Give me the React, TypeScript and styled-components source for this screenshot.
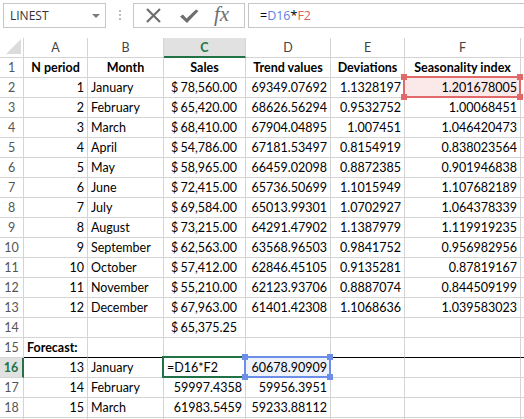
import styled, { createGlobalStyle } from "styled-components";

type Kind = "num" | "text" | "money" | "head" | "edit";
type Mark = "red" | "blue" | "active";
type Spec = { t?: string; k?: Kind; bold?: boolean; mark?: Mark };

const GREEN = "#217346";
const GRID = "#d4d4d4";

const marks: Record<Mark, { line: string; fill: string; handles: boolean; width: number }> = {
  red: { line: "#e06a6a", fill: "#fbe9e9", handles: true, width: 2 },
  blue: { line: "#6c8ee6", fill: "#eef2fc", handles: true, width: 2 },
  active: { line: GREEN, fill: "#fff", handles: false, width: 2 },
};

const months: string[][] = [
  ["1", "January", "78,560.00", "69349.07692", "1.1328197", "1.201678005"],
  ["2", "February", "65,420.00", "68626.56294", "0.9532752", "1.00068451"],
  ["3", "March", "68,410.00", "67904.04895", "1.007451", "1.046420473"],
  ["4", "April", "54,786.00", "67181.53497", "0.8154919", "0.838023564"],
  ["5", "May", "58,965.00", "66459.02098", "0.8872385", "0.901946838"],
  ["6", "June", "72,415.00", "65736.50699", "1.1015949", "1.107682189"],
  ["7", "July", "69,584.00", "65013.99301", "1.0702927", "1.064378339"],
  ["8", "August", "73,215.00", "64291.47902", "1.1387979", "1.119919235"],
  ["9", "September", "62,563.00", "63568.96503", "0.9841752", "0.956982956"],
  ["10", "October", "57,412.00", "62846.45105", "0.9135281", "0.87819167"],
  ["11", "November", "55,210.00", "62123.93706", "0.8887074", "0.844509199"],
  ["12", "December", "67,963.00", "61401.42308", "1.1068636", "1.039583023"],
];

const rows: Spec[][] = [
  ["N period", "Month", "Sales", "Trend values", "Deviations", "Seasonality index"].map((t) => ({ t, k: "head" as Kind })),
  ...months.map((m, i) => [
    { t: m[0] },
    { t: m[1], k: "text" as Kind },
    { t: m[2], k: "money" as Kind },
    { t: m[3] },
    { t: m[4] },
    { t: m[5], mark: i === 0 ? ("red" as Mark) : undefined },
  ]),
  [{}, {}, { t: "65,375.25", k: "money" }, {}, {}, {}],
  [{ t: "Forecast:", k: "text", bold: true }, {}, {}, {}, {}, {}],
  [{ t: "13" }, { t: "January", k: "text" }, { t: "=D16*F2", k: "edit", mark: "active" }, { t: "60678.90909", mark: "blue" }, {}, {}],
  [{ t: "14" }, { t: "February", k: "text" }, { t: "59997.4358" }, { t: "59956.3951" }, {}, {}],
  [{ t: "15" }, { t: "March", k: "text" }, { t: "61983.5459" }, { t: "59233.88112" }, {}, {}],
];

const GlobalStyle = createGlobalStyle`
  html, body { margin: 0; padding: 0; background: #fff; }
  body { font-family: "Lato", "Liberation Sans", sans-serif; }
`;

const Window = styled.div`
  width: 524px;
  height: 419px;
  overflow: hidden;
  background: #fff;
`;

const Toolbar = styled.div`
  height: 38px;
  box-sizing: border-box;
  padding: 3px 0 0 3px;
  display: flex;
  align-items: flex-start;
`;

const Box = styled.div`
  height: 25px;
  box-sizing: border-box;
  border: 1px solid #c6c6c6;
  display: flex;
  align-items: center;
`;

const NameBox = styled(Box)`
  width: 103px;
  justify-content: space-between;
  padding: 0 5px 0 6px;
  font-family: "Open Sans", "Liberation Sans", sans-serif;
  font-size: 12px;
  color: #333;
`;

const Caret = styled.span`
  width: 0;
  height: 0;
  border-left: 4px solid transparent;
  border-right: 4px solid transparent;
  border-top: 4px solid #7a7a7a;
`;

const Grip = styled.div`
  margin: 7px 12px 0 13px;
  display: flex;
  flex-direction: column;
  gap: 2px;
  span {
    width: 2px;
    height: 2px;
    background: #bdbdbd;
  }
`;

const FnBox = styled(Box)`
  width: 112px;
  padding-left: 11px;
  gap: 17px;
  color: #6e6e6e;
`;

const Fx = styled.span`
  font-family: "Liberation Serif", serif;
  font-style: italic;
  font-size: 21px;
  line-height: 1;
  margin: -3px 0 0 -2px;
  color: #6e6e6e;
`;

const FormulaBox = styled(Box)`
  flex: 1;
  margin-left: 3px;
  border-right: none;
  padding-left: 11px;
  font-family: "Open Sans", "Liberation Sans", sans-serif;
  font-size: 12.5px;
  color: #000;
`;

const Ref = styled.span<{ $c: string }>`
  color: ${(p) => p.$c};
`;

const Sheet = styled.div`
  display: grid;
  grid-template-columns: 24px 64px 76px 82px 85px 74px 116px 1fr;
  grid-auto-rows: 20px;
  font-size: 12.5px;
  color: #000;
`;

const Corner = styled.div`
  box-sizing: border-box;
  border-right: 1px solid ${GRID};
  border-bottom: 1px solid ${GRID};
  display: flex;
  align-items: flex-end;
  justify-content: flex-end;
  padding: 0 2px 3px 0;
`;

const ColHead = styled.div<{ $active?: boolean }>`
  box-sizing: border-box;
  border-right: 1px solid ${GRID};
  border-bottom: ${(p) => (p.$active ? `2px solid ${GREEN}` : `1px solid ${GRID}`)};
  background: ${(p) => (p.$active ? "#e1e1e1" : "#fff")};
  color: ${(p) => (p.$active ? GREEN : "#444")};
  font-weight: ${(p) => (p.$active ? 700 : 400)};
  text-align: center;
  line-height: 19px;
`;

const RowHead = styled.div<{ $active?: boolean }>`
  box-sizing: border-box;
  border-right: ${(p) => (p.$active ? `2px solid ${GREEN}` : `1px solid ${GRID}`)};
  border-bottom: 1px solid ${GRID};
  background: ${(p) => (p.$active ? "#e1e1e1" : "#fff")};
  color: ${(p) => (p.$active ? GREEN : "#555")};
  font-weight: ${(p) => (p.$active ? 700 : 400)};
  text-align: center;
  line-height: 20px;
`;

const Cell = styled.div<{ $align: string; $bold?: boolean; $rule?: boolean; $fill?: string }>`
  position: relative;
  box-sizing: border-box;
  border-right: 1px solid ${GRID};
  border-bottom: 1px solid ${(p) => (p.$rule ? "#000" : GRID)};
  background: ${(p) => p.$fill ?? "transparent"};
  padding: 0 3px;
  line-height: 20px;
  text-align: ${(p) => p.$align};
  font-weight: ${(p) => (p.$bold ? 700 : 400)};
  white-space: nowrap;
`;

const MoneyCell = styled(Cell)`
  display: flex;
  justify-content: space-between;
  padding: 0 8px 0 7px;
`;

const Outline = styled.span<{ $c: string; $w: number; $z: number }>`
  position: absolute;
  top: -${(p) => p.$w}px;
  left: -${(p) => p.$w}px;
  right: -1px;
  bottom: -1px;
  border: ${(p) => p.$w}px solid ${(p) => p.$c};
  z-index: ${(p) => p.$z};
  pointer-events: none;
`;

const Handle = styled.span<{ $c: string; $v: "top" | "bottom"; $h: "left" | "right" }>`
  position: absolute;
  width: 6px;
  height: 6px;
  background: ${(p) => p.$c};
  ${(p) => p.$v}: -4px;
  ${(p) => p.$h}: -4px;
`;

function Marker({ mark }: { mark: Mark }) {
  const m = marks[mark];
  return (
    <Outline $c={m.line} $w={m.width} $z={mark === "active" ? 2 : 3}>
      {m.handles &&
        (["top", "bottom"] as const).map((v) =>
          (["left", "right"] as const).map((h) => <Handle key={v + h} $c={m.line} $v={v} $h={h} />)
        )}
    </Outline>
  );
}

function SheetCell({ spec, rule }: { spec: Spec; rule: boolean }) {
  const fill = spec.mark ? marks[spec.mark].fill : undefined;
  const mark = spec.mark ? <Marker mark={spec.mark} /> : null;
  if (spec.k === "money") {
    return (
      <MoneyCell $align="right" $rule={rule} $fill={fill}>
        <span>$</span>
        <span>{spec.t}</span>
        {mark}
      </MoneyCell>
    );
  }
  const align = spec.k === "head" ? "center" : spec.k === "text" || spec.k === "edit" ? "left" : "right";
  return (
    <Cell $align={align} $bold={spec.bold || spec.k === "head"} $rule={rule} $fill={fill}>
      {spec.t}
      {mark}
    </Cell>
  );
}

export default function App() {
  return (
    <Window>
      <GlobalStyle />
      <Toolbar>
        <NameBox>
          LINEST
          <Caret />
        </NameBox>
        <Grip>
          <span />
          <span />
          <span />
        </Grip>
        <FnBox>
          <svg width="17" height="15" viewBox="0 0 17 15">
            <path d="M2 1 L15 14 M15 1 L2 14" stroke="currentColor" strokeWidth="2.2" fill="none" />
          </svg>
          <svg width="20" height="16" viewBox="0 0 20 16">
            <path d="M1 8.5 L4 6.5 L7.5 10.5 L17 1.5 L19.5 3 L8 15 Z" fill="currentColor" />
          </svg>
          <Fx>fx</Fx>
        </FnBox>
        <FormulaBox>
          =<Ref $c="#5b7fe2">D16</Ref>*<Ref $c="#e0605e">F2</Ref>
        </FormulaBox>
      </Toolbar>
      <Sheet>
        <Corner>
          <svg width="15" height="15" viewBox="0 0 15 15">
            <polygon points="15,0 15,15 0,15" fill="#dcdcdc" />
          </svg>
        </Corner>
        {["A", "B", "C", "D", "E", "F"].map((c) => (
          <ColHead key={c} $active={c === "C"}>
            {c}
          </ColHead>
        ))}
        <ColHead />
        {rows.map((row, r) => {
          const n = r + 1;
          const rule = n === 15;
          return [
            <RowHead key={`h${n}`} $active={n === 16}>
              {n}
            </RowHead>,
            ...row.map((spec, c) => <SheetCell key={`${n}-${c}`} spec={spec} rule={rule} />),
            <Cell key={`x${n}`} $align="left" $rule={rule} />,
          ];
        })}
        <RowHead />
        {[0, 1, 2, 3, 4, 5, 6].map((c) => (
          <Cell key={`end${c}`} $align="left" />
        ))}
      </Sheet>
    </Window>
  );
}
